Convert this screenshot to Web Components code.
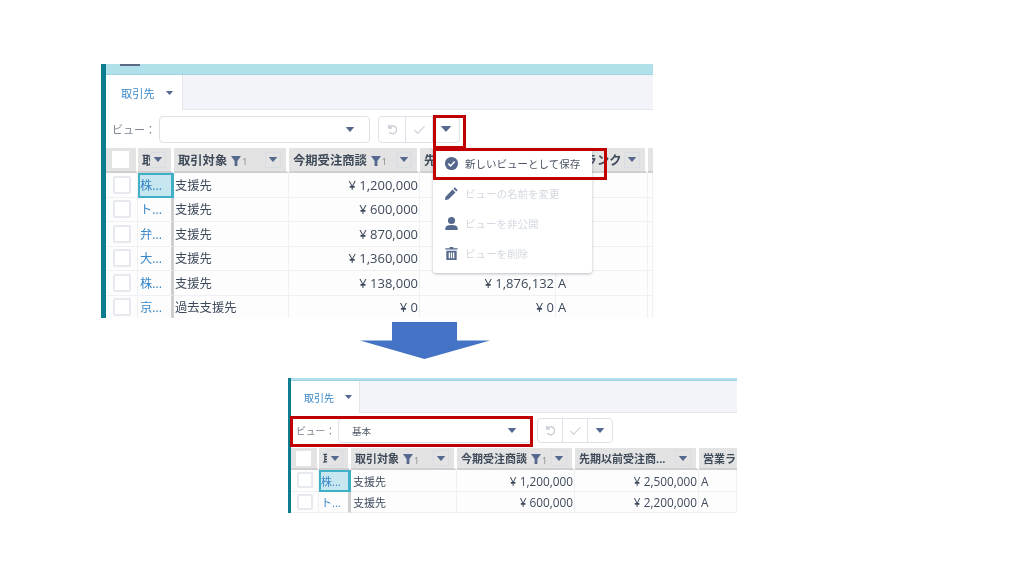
<!DOCTYPE html>
<html lang="ja">
<head>
<meta charset="utf-8">
<title>ビューの保存</title>
<style>
  html, body { margin: 0; background: #fff; }
  body { font-family: "Open Sans", "Noto Sans CJK JP", sans-serif; }
</style>
</head>
<body>
<slide-canvas>
  <list-shot id="before" style="left:101px;top:64px;width:552px;height:254px;--bar:5px;--band:11px;--tab-h:35px;--tab-w:77px;--tab-pad:15px;--tool-h:38px;--head-h:25px;--row-h:24.5px;--fs:12.3px;--hfs:12.3px;--num:13px;--tfs:11.2px;--cb:18px;--cols:32px 36px 115px 131px 136px 92px 1fr;--label-w:47px;--select-w:211px;--tool-gap:8px;--tool-pad:6px;--btn-w:26px;--btn-h:27px;--caret-box:16px;--go-w:10px;--go-h:6px;--kind-pad:1px;--row-nudge:0px;--head-pad:4px">
    <span slot="topmark" class="topmark"></span>
    <view-toolbar slot="toolbar"></view-toolbar>
    <head-row slot="head">
      <head-cell>取</head-cell>
      <head-cell filter>取引対象</head-cell>
      <head-cell filter>今期受注商談</head-cell>
      <head-cell>先期以前受注商談</head-cell>
      <head-cell>営業ランク</head-cell>
      <head-cell empty></head-cell>
    </head-row>
    <grid-row selected name="株..." kind="支援先" now="¥ 1,200,000"></grid-row>
    <grid-row name="ト..." kind="支援先" now="¥ 600,000"></grid-row>
    <grid-row name="弁..." kind="支援先" now="¥ 870,000"></grid-row>
    <grid-row name="大..." kind="支援先" now="¥ 1,360,000"></grid-row>
    <grid-row name="株..." kind="支援先" now="¥ 138,000" prev="¥ 1,876,132" rank="A"></grid-row>
    <grid-row name="京..." kind="過去支援先" now="¥ 0" prev="¥ 0" rank="A"></grid-row>
    <view-menu slot="overlay">
      <menu-item icon="check">新しいビューとして保存</menu-item>
      <menu-item icon="pencil" disabled>ビューの名前を変更</menu-item>
      <menu-item icon="person" disabled>ビューを非公開</menu-item>
      <menu-item icon="trash" disabled>ビューを削除</menu-item>
    </view-menu>
  </list-shot>

  <list-shot id="after" style="left:288px;top:378px;width:449px;height:134.500px;--bar:3px;--band:3px;--tab-h:32px;--tab-w:69px;--tab-pad:13px;--tool-h:35px;--head-h:22px;--row-h:21.5px;--fs:11px;--hfs:11px;--num:11.800px;--tfs:10px;--cb:16px;--cols:28px 32px 106px 118px 124px 1fr;--label-w:42px;--select-w:194px;--tool-gap:5px;--tool-pad:5px;--btn-w:24px;--btn-h:25px;--caret-box:16px;--go-w:8px;--go-h:5px;--kind-pad:2px;--row-nudge:1px;--head-pad:4px">
    <view-toolbar slot="toolbar" value="基本"></view-toolbar>
    <head-row slot="head">
      <head-cell>取</head-cell>
      <head-cell filter>取引対象</head-cell>
      <head-cell filter>今期受注商談</head-cell>
      <head-cell>先期以前受注商...</head-cell>
      <head-cell bare>営業ランク</head-cell>
    </head-row>
    <grid-row short selected name="株..." kind="支援先" now="¥ 1,200,000" prev="¥ 2,500,000" rank="A"></grid-row>
    <grid-row short name="ト..." kind="支援先" now="¥ 600,000" prev="¥ 2,200,000" rank="A"></grid-row>
  </list-shot>

  <red-box style="left:433px;top:115px;width:33px;height:34px"></red-box>
  <red-box style="left:433px;top:148px;width:174px;height:32px"></red-box>
  <red-box style="left:290px;top:416px;width:243px;height:31px"></red-box>
  <down-arrow style="left:360px;top:322px"></down-arrow>
</slide-canvas>

<script>
const caret = (w, h) => `<svg viewBox="0 0 10 6" width="${w}" height="${h}" preserveAspectRatio="none" style="flex:none"><path d="M0.4 0h9.2q.5 0 .2.5L5.4 5.6q-.4.4-.8 0L.2.5Q-.1 0 .4 0z" fill="#54698d"/></svg>`

class SlideCanvas extends HTMLElement {
    constructor() {
        super()
        this.attachShadow({ mode: 'open' }).innerHTML = `
            <style>:host{display:block;position:relative;width:1024px;height:576px;overflow:hidden;background:#fff}</style>
            <slot></slot>`
    }
}

class ListShot extends HTMLElement {
    constructor() {
        super()
        this.attachShadow({ mode: 'open' }).innerHTML = `
            <style>
                :host{position:absolute;display:flex;overflow:hidden;background:#fff;color:#3e4a5c;filter:blur(.35px)}
                .bar{width:var(--bar);background:#0b7d8f;flex:none}
                .main{flex:1;min-width:0;display:flex;flex-direction:column;position:relative}
                .band{height:var(--band);flex:none;background:#b0e0ea;border-bottom:1px solid #9fd3df;box-sizing:border-box;position:relative}
                .tabs{height:var(--tab-h);flex:none;background:#f3f4f9;border-bottom:1px solid #e4e6ec;box-sizing:border-box;display:flex}
                .tab{width:var(--tab-w);background:#fff;border-right:1px solid #e4e6ec;box-sizing:border-box;margin-bottom:-1px;
                     display:flex;align-items:center;gap:11px;padding-left:var(--tab-pad);font-size:var(--tfs);color:#3a87c8}
                ::slotted(.topmark){position:absolute;left:14px;top:0;width:20px;height:2px;background:#5b6a85}
                .overlay{position:absolute;inset:0;pointer-events:none}
            </style>
            <div class="bar"></div>
            <div class="main">
                <div class="band"><slot name="topmark"></slot></div>
                <div class="tabs"><div class="tab">取引先 ${caret(7, 4)}</div></div>
                <slot name="toolbar"></slot>
                <slot name="head"></slot>
                <slot></slot>
                <div class="overlay"><slot name="overlay"></slot></div>
            </div>`
    }
}

class ViewToolbar extends HTMLElement {
    connectedCallback() {
        const value = this.getAttribute('value') || ''
        this.attachShadow({ mode: 'open' }).innerHTML = `
            <style>
                :host{display:flex;align-items:center;height:var(--tool-h);padding-left:var(--tool-pad);flex:none;box-sizing:border-box}
                .label{width:var(--label-w);font-size:calc(var(--tfs) - .2px);color:#7a8290;flex:none;white-space:nowrap}
                .select{width:var(--select-w);height:var(--btn-h);box-sizing:border-box;border:1px solid #dde1e8;border-radius:4px;
                    display:flex;align-items:center;justify-content:space-between;padding:0 15px 0 13px;font-size:calc(var(--tfs) - .4px);color:#4b5563;flex:none}
                .group{display:flex;margin-left:var(--tool-gap);border:1px solid #dde1e8;border-radius:4px;height:var(--btn-h);box-sizing:border-box}
                .group div{width:var(--btn-w);display:flex;align-items:center;justify-content:center;border-right:1px solid #dde1e8}
                .group div:last-child{border-right:0}
                .go{width:var(--go-w);height:var(--go-h)}
            </style>
            <span class="label">ビュー：</span>
            <div class="select"><span>${value}</span>${caret(8, 5)}</div>
            <div class="group">
                <div><svg viewBox="0 0 14 14" width="13" height="13" fill="none" stroke="#c9ced6" stroke-width="1.5"><path d="M3 2v3.4h3.4M3.2 5.2C4.2 3.8 5.6 3 7.2 3a4.3 4.3 0 1 1-3.4 7"/></svg></div>
                <div><svg viewBox="0 0 14 14" width="13" height="13" fill="none" stroke="#d3d7de" stroke-width="1.4"><path d="M1.5 7.6l3.6 3.4 7.4-7.6"/></svg></div>
                <div>${caret(10, 6).replace('style="flex:none"', 'class="go"')}</div>
            </div>`
    }
}

class HeadRow extends HTMLElement {
    constructor() {
        super()
        this.attachShadow({ mode: 'open' }).innerHTML = `
            <style>
                :host{display:grid;grid-template-columns:var(--cols);height:var(--head-h);flex:none;box-sizing:border-box}
                .all{background:#e3e3e4;border-bottom:2px solid #cfcfd1;border-right:2px solid #fff;display:flex;align-items:center;justify-content:center;box-sizing:border-box}
                .all span{width:calc(var(--cb) - 1px);height:calc(var(--cb) - 1px);background:#fff;display:block;margin-left:-1px}
            </style>
            <div class="all"><span></span></div>
            <slot></slot>`
    }
}

class HeadCell extends HTMLElement {
    connectedCallback() {
        const filter = this.hasAttribute('filter')
        const bare = this.hasAttribute('bare')
        const empty = this.hasAttribute('empty')
        const mark = `<svg viewBox="0 0 10 10" width="10" height="10" style="flex:none;margin:2px 0 0 4px"><path d="M0 0h10L6.4 5v5H3.600V5z" fill="#54698d"/></svg><sub>1</sub>`
        this.attachShadow({ mode: 'open' }).innerHTML = `
            <style>
                :host{display:flex;align-items:center;background:#e3e3e4;border-bottom:2px solid #cfcfd1;border-right:3px solid #fff;
                      box-sizing:border-box;padding:0 5px 0 var(--head-pad);min-width:0;overflow:hidden;font-size:var(--hfs);font-weight:700;color:#3f4a58;white-space:nowrap}
                :host([bare]){border-right:0;padding-right:0}
                .t{overflow:hidden;flex:0 1 auto;min-width:0}
                sub{font-size:9px;font-weight:400;color:#888;margin:4px 0 0 1px;line-height:1;vertical-align:baseline}
                .box{margin-left:auto;flex:none;width:var(--caret-box);height:var(--caret-box);border:1px solid #d9dce3;box-sizing:border-box;display:flex;align-items:center;justify-content:center}
            </style>
            <span class="t"><slot></slot></span>${filter ? mark : ''}${bare || empty ? '' : `<span class="box">${caret(8, 5)}</span>`}`
    }
}

class GridRow extends HTMLElement {
    connectedCallback() {
        const a = n => this.getAttribute(n) || ''
        const short = this.hasAttribute('short')
        this.attachShadow({ mode: 'open' }).innerHTML = `
            <style>
                :host{display:grid;grid-template-columns:var(--cols);height:var(--row-h);flex:none;box-sizing:border-box;font-size:var(--fs);background:#fdfdfd}
                div{border-right:1px solid #eff0f3;border-bottom:1px solid #eff0f3;box-sizing:border-box;display:flex;align-items:center;padding:var(--row-nudge) 2px 0;overflow:hidden;white-space:nowrap}
                .cb{justify-content:center;padding:0}
                .cb span{width:var(--cb);height:var(--cb);box-sizing:border-box;border:2px solid #e6e9ef;border-radius:2px;background:#fff;display:block}
                .name{color:#3a87c8;border-right:3px solid #cfcfd1;padding-left:2px}
                :host([selected]) .name{background:#c6e7f0;outline:2px solid #3fb0c6;outline-offset:-2px;border-right-color:#3fb0c6}
                .kind{padding-left:var(--kind-pad)}
                .num{justify-content:flex-end;font-size:var(--num);padding-right:1px}
                .rank{font-size:var(--num)}
            </style>
            <div class="cb"><span></span></div>
            <div class="name">${a('name')}</div>
            <div class="kind">${a('kind')}</div>
            <div class="num">${a('now')}</div>
            <div class="num">${a('prev')}</div>
            <div class="rank">${a('rank')}</div>
            ${short ? '' : '<div></div>'}`
    }
}

class ViewMenu extends HTMLElement {
    constructor() {
        super()
        this.attachShadow({ mode: 'open' }).innerHTML = `
            <style>
                :host{position:absolute;left:327px;top:84px;width:159px;height:125px;background:#fff;border-radius:3px;
                      box-shadow:0 1px 3px rgba(60,70,90,.35);display:flex;flex-direction:column;box-sizing:border-box}
            </style>
            <slot></slot>`
    }
}

const ICONS = {
    check: `<circle cx="8" cy="8" r="7"/><path d="M4.600 8.200l2.400 2.400 4.400-4.800" fill="none" stroke="#fff" stroke-width="1.700"/>`,
    pencil: `<path d="M11.600 1.400l3 3-1.500 1.500-3-3zM9.200 3.800l3 3-7.600 7.600L1 15l.6-3.600z"/>`,
    person: `<circle cx="8" cy="4.800" r="3.800"/><path d="M1.400 15v-1.800c0-2.400 2.400-3.600 6.600-3.600s6.600 1.200 6.600 3.600V15z"/>`,
    trash: `<path d="M6 1h4v1.300h4.500v1.500h-13V2.300H6zM2.500 5h11v10h-11zM5 7v6h1.400V7zM7.300 7v6h1.400V7zM9.600 7v6H11V7z" fill-rule="evenodd"/>`
}

class MenuItem extends HTMLElement {
    connectedCallback() {
        this.attachShadow({ mode: 'open' }).innerHTML = `
            <style>
                :host{display:flex;align-items:center;height:30px;padding-left:11px;gap:6px;font-size:10.5px;color:#4c5666;white-space:nowrap}
                :host([disabled]){color:#d3d8e0}
                svg{width:15px;height:15px;fill:#54698d;flex:none}
            </style>
            <svg viewBox="0 0 16 16">${ICONS[this.getAttribute('icon')]}</svg>
            <span><slot></slot></span>`
    }
}

class RedBox extends HTMLElement {
    constructor() {
        super()
        this.attachShadow({ mode: 'open' }).innerHTML = `
            <style>:host{position:absolute;display:block;box-sizing:border-box;border:3px solid #c00000}</style>`
    }
}

class DownArrow extends HTMLElement {
    constructor() {
        super()
        this.attachShadow({ mode: 'open' }).innerHTML = `
            <style>:host{position:absolute;display:block;width:130px;height:37px}svg{display:block}</style>
            <svg width="130" height="37" viewBox="0 0 130 37"><path d="M32 0h65v18.500h33L64.500 37 0 18.500h32z" fill="#4472c4"/></svg>`
    }
}

customElements.define('slide-canvas', SlideCanvas)
customElements.define('list-shot', ListShot)
customElements.define('view-toolbar', ViewToolbar)
customElements.define('head-row', HeadRow)
customElements.define('head-cell', HeadCell)
customElements.define('grid-row', GridRow)
customElements.define('view-menu', ViewMenu)
customElements.define('menu-item', MenuItem)
customElements.define('red-box', RedBox)
customElements.define('down-arrow', DownArrow)
</script>
</body>
</html>
